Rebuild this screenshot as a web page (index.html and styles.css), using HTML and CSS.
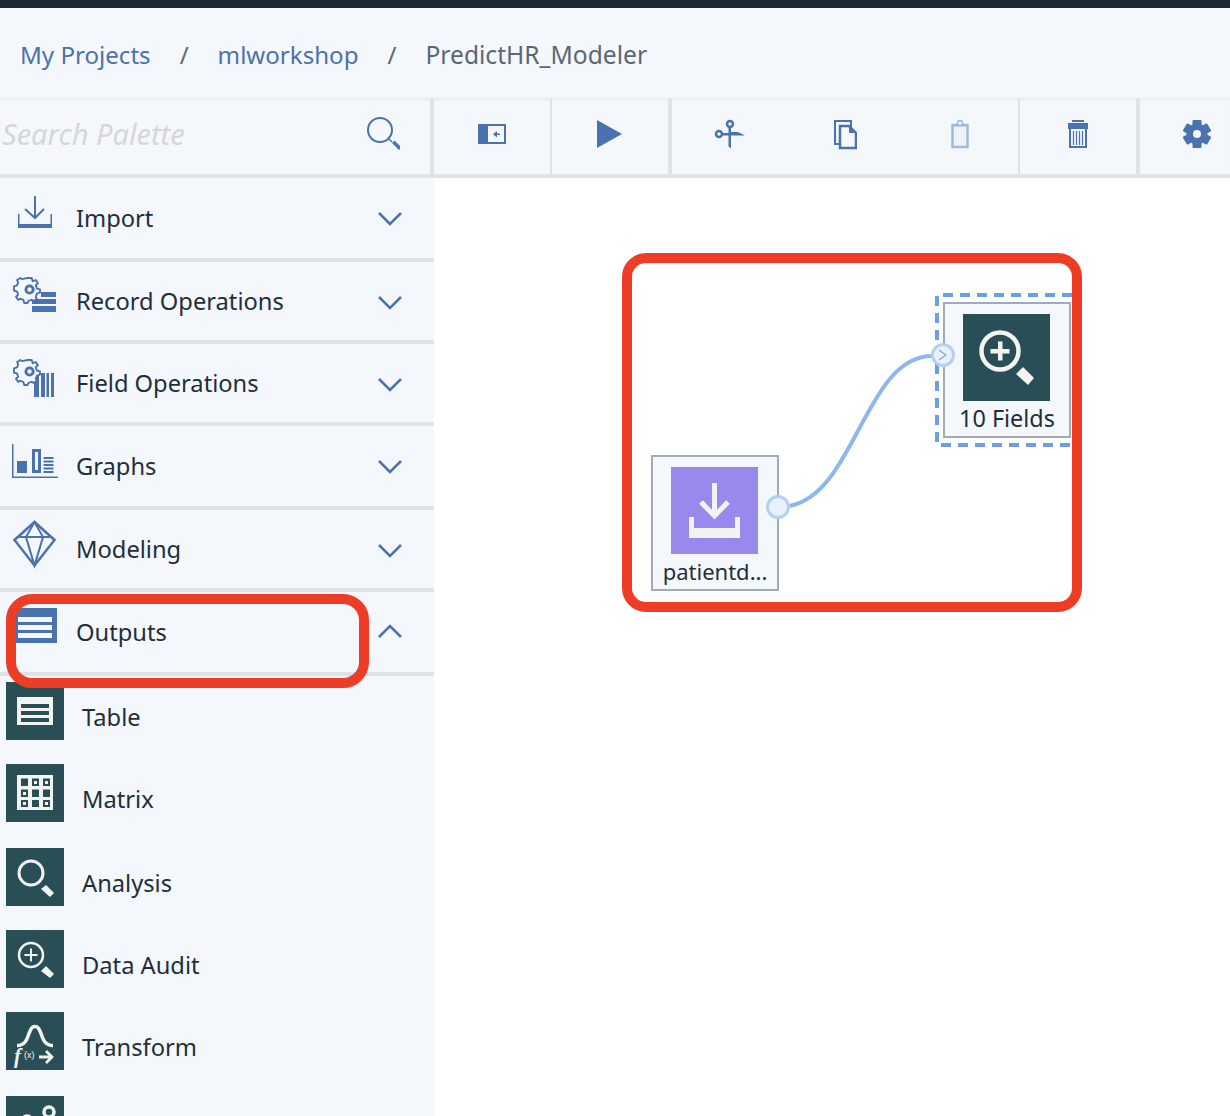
FILE: index.html
```html
<!DOCTYPE html>
<html lang="en">
<head>
    <meta charset="UTF-8">
    <meta name="viewport" content="width=device-width, initial-scale=1.0">
    <title>PredictHR_Modeler</title>
    <link rel="stylesheet" href="styles.css">
</head>
<body>
    <div class="topbar"></div>

    <nav class="breadcrumb">
        <a class="crumb">My Projects</a>
        <span class="slash">/</span>
        <a class="crumb">mlworkshop</a>
        <span class="slash">/</span>
        <span class="current">PredictHR_Modeler</span>
    </nav>

    <div class="workspace">
        <aside class="palette">
            <div class="search">
                <span class="search-text">Search Palette</span>
                <svg class="search-icon" width="36" height="36" viewBox="0 0 36 36">
                    <circle cx="16" cy="14" r="12" fill="none" stroke="#4a72ae" stroke-width="2"/>
                    <path d="M25 23l3 3" stroke="#4a72ae" stroke-width="1.500"/>
                    <path d="M28 27l2.500-2.500 7 7-2.500 2.500z" fill="#4a72ae"/>
                </svg>
            </div>

            <div class="group g80">
                <svg class="group-icon" width="44" height="46" viewBox="0 0 44 46">
                    <path d="M21 6h2v22h-2z" fill="#4a72ae"/>
                    <path d="M12 19l10 9 9-9" fill="none" stroke="#4a72ae" stroke-width="2"/>
                    <path d="M5 24h1.500v10h31V24H39v14H5z" fill="#4a72ae"/>
                </svg>
                <span class="group-name">Import</span>
                <svg class="chev" width="26" height="16" viewBox="0 0 26 16"><path d="M2 2l11 11L24 2" fill="none" stroke="#4a72ae" stroke-width="2.500"/></svg>
            </div>
            <div class="group g78">
                <svg class="group-icon" width="44" height="46" viewBox="0 0 44 46">
                    <path d="M28 18h15v5H28zM19 25h24v5H19zM19 32h24v6H19z" fill="#4a72ae"/>
                    <g transform="translate(2 3) scale(1.040)">
                        <path d="M12 1h4l1 3 3-1 2 3-2 2 1 3 3 1v3l-3 1-1 3 1 2-3 2-2-1-3 1-1 2h-3l-1-3-3-1-2 1-2-3 2-2-1-3-3-1V9l3-1 1-3-1-2 3-2 2 1z" fill="#f4f7fc" stroke="#4a72ae" stroke-width="1.800"/>
                        <circle cx="14" cy="12" r="3.500" fill="none" stroke="#4a72ae" stroke-width="2.800"/>
                    </g>
                </svg>
                <span class="group-name">Record Operations</span>
                <svg class="chev" width="26" height="16" viewBox="0 0 26 16"><path d="M2 2l11 11L24 2" fill="none" stroke="#4a72ae" stroke-width="2.500"/></svg>
            </div>
            <div class="group g78">
                <svg class="group-icon" width="44" height="46" viewBox="0 0 44 46">
                    <path d="M21 19h5v22h-5zM28 17h4v24h-4zM33.500 17H36v24h-2.500zM38 17h3v24h-3z" fill="#4a72ae"/>
                    <g transform="translate(2 3) scale(1.040)">
                        <path d="M12 1h4l1 3 3-1 2 3-2 2 1 3 3 1v3l-3 1-1 3 1 2-3 2-2-1-3 1-1 2h-3l-1-3-3-1-2 1-2-3 2-2-1-3-3-1V9l3-1 1-3-1-2 3-2 2 1z" fill="#f4f7fc" stroke="#4a72ae" stroke-width="1.800"/>
                        <circle cx="14" cy="12" r="3.500" fill="none" stroke="#4a72ae" stroke-width="2.800"/>
                    </g>
                </svg>
                <span class="group-name">Field Operations</span>
                <svg class="chev" width="26" height="16" viewBox="0 0 26 16"><path d="M2 2l11 11L24 2" fill="none" stroke="#4a72ae" stroke-width="2.500"/></svg>
            </div>
            <div class="group g80">
                <svg class="group-icon" width="44" height="46" viewBox="0 0 44 46">
                    <path d="M-1 6H.5v32.500H45V40H-1z" fill="#4a72ae"/>
                    <path d="M4 23h10v12H4z" fill="#4a72ae"/>
                    <path d="M20.500 12.500h6v21h-6z" fill="none" stroke="#4a72ae" stroke-width="3"/>
                    <path d="M30.500 20h10M30.500 23.500h10M30.500 27h10M30.500 30.500h10M30.500 34h10" stroke="#4a72ae" stroke-width="1.800"/>
                </svg>
                <span class="group-name">Graphs</span>
                <svg class="chev" width="26" height="16" viewBox="0 0 26 16"><path d="M2 2l11 11L24 2" fill="none" stroke="#4a72ae" stroke-width="2.500"/></svg>
            </div>
            <div class="group g78">
                <svg class="group-icon" width="44" height="46" viewBox="0 0 44 46">
                    <path d="M21.500 0L1.500 18l20 25.500 20-25.500z" fill="none" stroke="#4a72ae" stroke-width="2.500"/>
                    <path d="M21.500 0L13 15l8.500 28.500L30 15zM4 15h35" fill="none" stroke="#4a72ae" stroke-width="2"/>
                </svg>
                <span class="group-name">Modeling</span>
                <svg class="chev" width="26" height="16" viewBox="0 0 26 16"><path d="M2 2l11 11L24 2" fill="none" stroke="#4a72ae" stroke-width="2.500"/></svg>
            </div>
            <div class="group g80">
                <svg class="group-icon" width="44" height="46" viewBox="0 0 44 46">
                    <path d="M3 4h41v35H3z" fill="#4a72ae"/>
                    <path d="M5 13h34v5H5zM5 21h34v5H5zM5 29h34v5H5z" fill="#f4f7fc"/>
                </svg>
                <span class="group-name">Outputs</span>
                <svg class="chev up" width="26" height="16" viewBox="0 0 26 16"><path d="M2 14L13 3l11 11" fill="none" stroke="#4a72ae" stroke-width="2.500"/></svg>
            </div>

            <div class="items">
                <div class="item">
                    <div class="tile">
                        <svg width="58" height="58" viewBox="0 0 58 58">
                            <path d="M11 15h36v28H11z" fill="#f3f3f1"/>
                            <path d="M15 22h28v4H15zM15 29h28v4H15zM15 36h28v4H15z" fill="#294e56"/>
                        </svg>
                    </div>
                    <span class="item-name">Table</span>
                </div>
                <div class="item tall">
                    <div class="tile">
                        <svg width="58" height="58" viewBox="0 0 58 58">
                            <path d="M11 11h36v35H11z" fill="#f3f3f1"/>
                            <path d="M15 14.500h7v7.500h-7zM26 14.500h7v7.500h-7zM37 14.500h7v7.500h-7zM15 25.500h7V33h-7zM26 25.500h7V33h-7zM37 25.500h7V33h-7zM15 36h7v7h-7zM26 36h7v7h-7zM37 36h7v7h-7z" fill="#294e56"/>
                            <path d="M28 17h3v3h-3zM39 17h3v3h-3zM17 28h3v3h-3zM39 38h3v3h-3zM17 38h3v3h-3z" fill="#f3f3f1"/>
                        </svg>
                    </div>
                    <span class="item-name">Matrix</span>
                </div>
                <div class="item">
                    <div class="tile">
                        <svg width="58" height="58" viewBox="0 0 58 58">
                            <circle cx="25" cy="25" r="12" fill="none" stroke="#f3f3f1" stroke-width="3"/>
                            <path d="M35 41l5-4 8 8-4 4z" fill="#f3f3f1"/>
                        </svg>
                    </div>
                    <span class="item-name">Analysis</span>
                </div>
                <div class="item">
                    <div class="tile">
                        <svg width="58" height="58" viewBox="0 0 58 58">
                            <circle cx="25" cy="25" r="12" fill="none" stroke="#f3f3f1" stroke-width="2.500"/>
                            <path d="M24 18.500h2v13h-2zM18.500 24h13v2h-13z" fill="#f3f3f1"/>
                            <path d="M35 41l5-5 8 8-4 4z" fill="#f3f3f1"/>
                        </svg>
                    </div>
                    <span class="item-name">Data Audit</span>
                </div>
                <div class="item tall">
                    <div class="tile">
                        <svg width="58" height="58" viewBox="0 0 58 58">
                            <path d="M11 33.500c8 0 10-6 12-12 2-5 3-7 6-7s4 2 6 7c2 6 4 12 12 12" fill="none" stroke="#f3f3f1" stroke-width="3.500"/>
                            <path d="M33 45h13M40 39l6 6-6 6" fill="none" stroke="#f3f3f1" stroke-width="2.800"/>
                            <text class="fx-f" x="8" y="51">f</text>
                            <text class="fx-x" x="18" y="46">(x)</text>
                        </svg>
                    </div>
                    <span class="item-name">Transform</span>
                </div>
                <div class="item">
                    <div class="tile">
                        <svg width="58" height="58" viewBox="0 0 58 58">
                            <circle cx="43" cy="16" r="5" fill="none" stroke="#f3f3f1" stroke-width="3.500"/>
                            <circle cx="21" cy="25" r="5" fill="none" stroke="#f3f3f1" stroke-width="3.500"/>
                        </svg>
                    </div>
                </div>
            </div>
        </aside>

        <main class="main">
            <div class="toolbar">
                <div class="tool-group w118">
                    <svg width="30" height="22" viewBox="0 0 30 22">
                        <path d="M1 1h28v20H1z" fill="#4a72ae"/>
                        <path d="M11 3h16v16H11z" fill="#f4f7fc"/>
                        <path d="M17 10.500h6V12h-6zM20 8v6.500l-4-3.200z" fill="#4a72ae"/>
                    </svg>
                </div>
                <div class="tool-group w120 thick">
                    <svg width="26" height="28" viewBox="0 0 26 28"><path d="M0 0l25 14L0 28z" fill="#4a72ae"/></svg>
                </div>
                <div class="tool-group w348">
                    <div class="tool">
                        <svg width="32" height="32" viewBox="0 0 32 32">
                            <circle cx="16" cy="6" r="3" fill="none" stroke="#4a72ae" stroke-width="2.500"/>
                            <circle cx="5" cy="16" r="3" fill="none" stroke="#4a72ae" stroke-width="2.500"/>
                            <path d="M14.500 9H17v5h7l7 3.500H17v13l-2.500-2V17.500H8V15h6.500z" fill="#4a72ae"/>
                        </svg>
                    </div>
                    <div class="tool">
                        <svg width="24" height="32" viewBox="0 0 24 32">
                            <path d="M2 3h16v23H2z" fill="none" stroke="#4a72ae" stroke-width="2"/>
                            <path d="M7 8h9l7 7v15H7z" fill="#f4f7fc" stroke="#4a72ae" stroke-width="2.500"/>
                            <path d="M16 8v7h7z" fill="#4a72ae"/>
                        </svg>
                    </div>
                    <div class="tool">
                        <svg width="20" height="32" viewBox="0 0 20 32">
                            <path d="M2.500 7h15v22h-15z" fill="#eef3fa" stroke="#a3b9d8" stroke-width="2.500"/>
                            <path d="M5 6h10v2.500H5z" fill="#a3b9d8"/>
                            <circle cx="10" cy="5" r="2.500" fill="#f4f7fc" stroke="#a3b9d8" stroke-width="1.500"/>
                        </svg>
                    </div>
                </div>
                <div class="tool-group w120 thick">
                    <svg width="22" height="32" viewBox="0 0 22 32">
                        <path d="M5 2h12v2H5zM1 5h20v6H1z" fill="#4a72ae"/>
                        <path d="M3 10h16v19H3z" fill="#f4f7fc" stroke="#4a72ae" stroke-width="2"/>
                        <path d="M6.500 13v14M9.500 13v14M12.500 13v14M15.500 13v14" stroke="#4a72ae" stroke-width="1.200"/>
                    </svg>
                </div>
                <div class="tool-group last">
                    <svg width="30" height="30" viewBox="-15 -15 30 30">
                        <circle r="10.500" fill="#4a72ae"/>
                        <rect x="-4.500" y="-14" width="9" height="8" rx="1" fill="#4a72ae"/>
                        <rect x="-4.500" y="-14" width="9" height="8" rx="1" fill="#4a72ae" transform="rotate(60)"/>
                        <rect x="-4.500" y="-14" width="9" height="8" rx="1" fill="#4a72ae" transform="rotate(120)"/>
                        <rect x="-4.500" y="-14" width="9" height="8" rx="1" fill="#4a72ae" transform="rotate(180)"/>
                        <rect x="-4.500" y="-14" width="9" height="8" rx="1" fill="#4a72ae" transform="rotate(240)"/>
                        <rect x="-4.500" y="-14" width="9" height="8" rx="1" fill="#4a72ae" transform="rotate(300)"/>
                        <circle r="4" fill="#f4f7fc"/>
                    </svg>
                </div>
            </div>

            <div class="canvas">
                <svg class="wires" width="796" height="938" viewBox="434 178 796 938">
                    <path class="wire" d="M789 506C855 495 865 356 932 356"/>
                    <path class="dash" d="M1072 295H937V445H1072"/>
                </svg>

                <div class="node node-source">
                    <div class="node-tile purple">
                        <svg width="87" height="87" viewBox="0 0 87 87">
                            <path d="M41 16h5v31h-5z" fill="#f3f3f1"/>
                            <path d="M30 35l13.500 14L57 35" fill="none" stroke="#f3f3f1" stroke-width="5"/>
                            <path d="M18 50h5v11h41V50h5v21H18z" fill="#f3f3f1"/>
                        </svg>
                    </div>
                    <span class="node-label">patientd...</span>
                </div>

                <div class="node node-audit">
                    <div class="node-tile teal">
                        <svg width="87" height="87" viewBox="0 0 87 87">
                            <circle cx="37" cy="37" r="18.500" fill="none" stroke="#f3f3f1" stroke-width="4.500"/>
                            <path d="M35 27.500h4.500v19H35zM27.500 35h19v4.500h-19z" fill="#f3f3f1"/>
                            <path d="M53 60l7-7 11 11-6 7z" fill="#f3f3f1"/>
                        </svg>
                    </div>
                    <span class="node-label">10 Fields</span>
                </div>

                <div class="port port-out"></div>
                <div class="port port-in">
                    <svg width="10" height="12" viewBox="0 0 10 12"><path d="M1 1l7 5-7 5" fill="none" stroke="#7ba6e4" stroke-width="1.200"/></svg>
                </div>

                <div class="callout callout-canvas"></div>
            </div>
        </main>

        <div class="callout callout-outputs"></div>
    </div>
</body>
</html>
```
FILE: styles.css
```css
html, body {
    margin: 0;
    height: 100%;
    overflow: hidden;
}
body {
    font-family: "Noto Sans", "Liberation Sans", sans-serif;
    background: #fff;
    color: #1f2f3a;
    width: 1230px;
    height: 1116px;
}
svg {
    display: block;
}
.topbar {
    height: 8px;
    background: #1b2935;
}
.breadcrumb {
    height: 90px;
    box-sizing: border-box;
    background: #f4f7fc;
    display: flex;
    align-items: center;
    padding: 2px 0 0 20px;
    font-size: 24.1px;
}
.crumb {
    color: #4a72ae;
}
.slash {
    color: #5a6872;
    margin: 0 29px;
}
.current {
    color: #5a6872;
    font-size: 24.6px;
}

.workspace {
    position: relative;
    display: flex;
    height: 1018px;
}
.palette {
    width: 434px;
    flex: none;
    background: #f4f7fc;
    overflow: hidden;
}
.search {
    height: 80px;
    box-sizing: border-box;
    display: flex;
    align-items: center;
    justify-content: space-between;
    border-right: 4px solid #dfe3e6;
    border-bottom: 4px solid #dfe3e6;
    box-shadow: inset 0 3px 3px -2px #dfe3e6;
    padding: 0 30px 4px 2px;
}
.search-text {
    font-size: 29px;
    font-style: italic;
    color: #d4d7d9;
    margin-bottom: 2px;
}
.group {
    display: flex;
    align-items: center;
    box-sizing: border-box;
    position: relative;
    border-bottom: 4px solid #dfe3e6;
    padding-left: 76px;
    font-size: 23.7px;
}
.g80 {
    height: 84px;
}
.g78 {
    height: 82px;
}
.group-name {
    color: #1f2f3a;
}
.group-icon {
    position: absolute;
    left: 13px;
    top: 12px;
    overflow: visible;
}
.chev {
    position: absolute;
    left: 377px;
    top: 33px;
}
.chev.up {
    top: 31px;
}
.items {
    padding-top: 6px;
}
.item {
    height: 82px;
    display: flex;
    align-items: flex-start;
}
.item.tall {
    height: 84px;
}
.tile {
    width: 58px;
    height: 58px;
    background: #294e56;
    margin-left: 6px;
    flex: none;
}
.item-name {
    margin-left: 18px;
    font-size: 23.7px;
    line-height: 70px;
}
.fx-f {
    font-family: "Liberation Serif", serif;
    font-style: italic;
    font-weight: bold;
    font-size: 21px;
    fill: #f3f3f1;
}
.fx-x {
    font-family: "Liberation Sans", sans-serif;
    font-size: 9px;
    fill: #f3f3f1;
}

.main {
    flex: 1;
    min-width: 0;
    display: flex;
    flex-direction: column;
}
.toolbar {
    height: 80px;
    flex: none;
    box-sizing: border-box;
    display: flex;
    background: #f4f7fc;
    border-bottom: 4px solid #dfe3e6;
    box-shadow: inset 0 3px 3px -2px #dfe3e6;
}
.tool-group {
    display: flex;
    align-items: center;
    justify-content: center;
    box-sizing: border-box;
    padding-bottom: 4px;
    border-right: 2px solid #dfe3e6;
    flex: none;
}
.tool-group.thick {
    border-right-width: 4px;
}
.w118 {
    width: 118px;
}
.w120 {
    width: 120px;
}
.w348 {
    width: 348px;
    justify-content: space-around;
}
.tool {
    width: 116px;
    display: flex;
    justify-content: center;
}
.last {
    border-right: none;
    flex: 1;
    padding-left: 24px;
}

.canvas {
    position: relative;
    flex: 1;
}
.wires {
    position: absolute;
    left: 0;
    top: 0;
}
.wire {
    fill: none;
    stroke: #8eb8ec;
    stroke-width: 4;
}
.dash {
    fill: none;
    stroke: #6a9fe6;
    stroke-width: 4;
    stroke-dasharray: 10 7;
}

/* canvas coordinates: page x - 434, page y - 178 */
.node {
    position: absolute;
    width: 128px;
    height: 136px;
    box-sizing: border-box;
    border: 2px solid #a1abb2;
    background: #f4f7fc;
    display: flex;
    flex-direction: column;
    align-items: center;
    padding-top: 10px;
}
.node-source {
    left: 217px;
    top: 277px;
}
.node-source .node-label {
    font-size: 22px;
}
.node-audit {
    left: 509px;
    top: 124px;
}
.node-tile {
    width: 87px;
    height: 87px;
    flex: none;
    margin-right: 1px;
}
.purple {
    background: #9a89ec;
}
.teal {
    background: #294e56;
}
.node-label {
    font-size: 23.4px;
    line-height: 34px;
    color: #1f2f3a;
}
.port {
    position: absolute;
    width: 24px;
    height: 24px;
    box-sizing: border-box;
    border: 3px solid #b3d0f2;
    border-radius: 50%;
    background: #e9f1fb;
    display: flex;
    align-items: center;
    justify-content: center;
}
.port-out {
    left: 332px;
    top: 317px;
}
.port-in {
    left: 497px;
    top: 165px;
}

.callout {
    position: absolute;
    box-sizing: border-box;
    border: 10px solid #ee3d26;
}
.callout-canvas {
    left: 188px;
    top: 75px;
    width: 460px;
    height: 359px;
    border-radius: 24px;
}
.callout-outputs {
    left: 6px;
    top: 496px;
    width: 363px;
    height: 94px;
    border-radius: 26px;
}
```
